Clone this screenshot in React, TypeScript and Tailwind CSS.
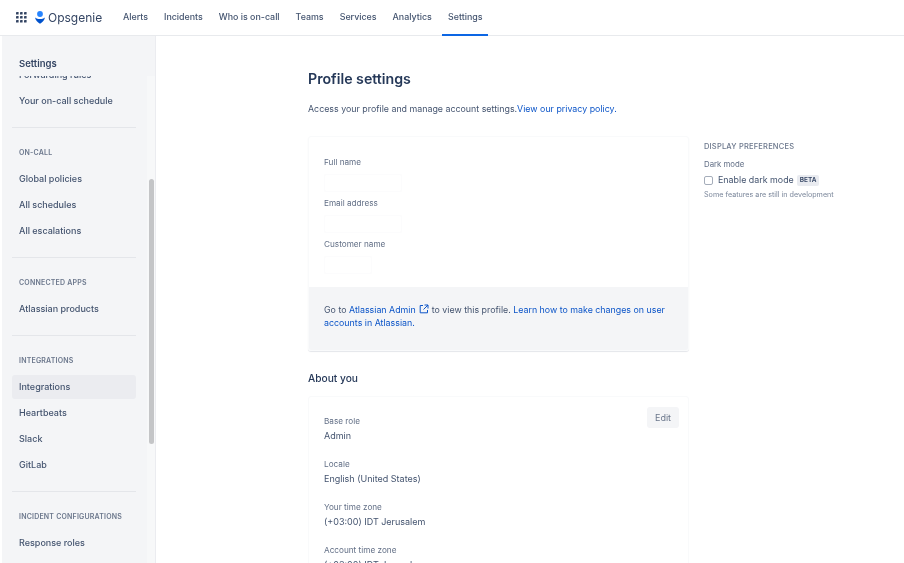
import React from "react";

const nav = ["Alerts", "Incidents", "Who is on-call", "Teams", "Services", "Analytics", "Settings"];

function Item({ label, active }: { label: string; active?: boolean }) {
  return (
    <div className={`h-[24px] mb-[2px] flex items-center px-[7px] rounded-[3px] text-[9px] font-medium whitespace-nowrap text-[#44546f] ${active ? "bg-[#ebecf0]" : ""}`}>
      {label}
    </div>
  );
}

function Heading({ label }: { label: string }) {
  return <div className="h-[12px] mb-[8px] px-[7px] flex items-center text-[7px] font-semibold tracking-[0.2px] whitespace-nowrap text-[#6b778c]">{label}</div>;
}

function Divider() {
  return <div className="h-px bg-[#e4e6ea] mt-[14px] mb-[19px]" />;
}

function Field({ label, value }: { label: string; value: string }) {
  return (
    <div className="h-[43px]">
      <div className="h-[17px] flex items-center text-[8.2px] text-[#626f86]">{label}</div>
      <div className="h-[11px] flex items-center text-[9px] text-[#44546f] whitespace-nowrap">{value}</div>
    </div>
  );
}

function Blank({ label, w }: { label: string; w: number }) {
  return (
    <div className="h-[41px]">
      <div className="h-[14px] flex items-center text-[8.2px] text-[#626f86]">{label}</div>
      <div className="mt-[5px] h-[18px] border border-[#fcfcfd] rounded-[2px]" style={{ width: w }} />
    </div>
  );
}

export default function App() {
  return (
    <div className="w-[904px] h-[563px] overflow-hidden bg-white flex flex-col font-['Inter',sans-serif] blur-[0.5px]">
      <header className="h-[36px] shrink-0 flex items-stretch border-b border-[#e8eaed] pl-[16px]">
        <div className="flex items-center w-[99px] shrink-0">
          <svg width="11" height="11" viewBox="0 0 11 11" fill="#344563">
            {[0, 4, 8].flatMap((y) =>
              [0, 4, 8].map((x) => <rect key={`${x}-${y}`} x={x} y={y} width="2.6" height="2.6" rx="0.4" />)
            )}
          </svg>
          <svg className="ml-[8px]" width="10" height="13" viewBox="0 0 10 13" fill="#2684ff">
            <circle cx="5" cy="3" r="2.9" />
            <path d="M0.2 6.4 C1.5 7.6 3 8 5 8 C7 8 8.5 7.6 9.8 6.4 C10.2 8.4 7.6 11.2 5 12.8 C2.4 11.2 -0.2 8.4 0.2 6.4 Z" fill="#0052cc" />
          </svg>
          <span className="ml-[3px] text-[12px] text-[#344563]">Opsgenie</span>
        </div>
        <nav className="flex items-stretch">
          {nav.map((n) => (
            <div
              key={n}
              className={`flex items-center -mb-px text-[8.87px] font-medium text-[#44546f] ${n === "Settings" ? "ml-[2.5px] w-[46px] justify-center border-b-2 border-[#0c66e4]" : "px-[8px] pb-[2px]"}`}
            >
              {n}
            </div>
          ))}
        </nav>
      </header>

      <div className="flex-1 flex min-h-0">
        <aside className="w-[154px] ml-[2px] shrink-0 bg-[#f4f5f7] flex flex-col border-r border-[#ebecf0]">
          <div className="h-[40px] shrink-0 pl-[17px] pt-[22px] text-[9.5px] leading-[12px] font-semibold text-[#344563]">Settings</div>
          <div className="flex-1 min-h-0 flex">
            <div className="w-[146px] pl-[10px] pr-[11px] overflow-hidden">
              <div className="-mt-[13px]">
                <Item label="Forwarding rules" />
                <Item label="Your on-call schedule" />
                <Divider />
                <Heading label="ON-CALL" />
                <Item label="Global policies" />
                <Item label="All schedules" />
                <Item label="All escalations" />
                <Divider />
                <Heading label="CONNECTED APPS" />
                <Item label="Atlassian products" />
                <Divider />
                <Heading label="INTEGRATIONS" />
                <Item label="Integrations" active />
                <Item label="Heartbeats" />
                <Item label="Slack" />
                <Item label="GitLab" />
                <Divider />
                <Heading label="INCIDENT CONFIGURATIONS" />
                <Item label="Response roles" />
              </div>
            </div>
            <div className="w-[8px] bg-[#f7f8f9] pt-[103px]">
              <div className="ml-[2px] w-[5px] h-[265px] rounded-full bg-[#c4c5c7]" />
            </div>
          </div>
        </aside>

        <main className="flex-1 min-w-0 pl-[152px] flex gap-[15px] overflow-hidden">
          <div className="w-[381px] shrink-0">
            <h1 className="mt-[33px] h-[20px] flex items-center text-[14.2px] font-semibold text-[#253858]">Profile settings</h1>
            <p className="mt-[13px] h-[14px] flex items-center text-[8.85px] text-[#44546f] whitespace-pre">
              Access your profile and manage account settings.<span className="text-[#0c55c8]">View our privacy policy.</span>
            </p>
            <section className="mt-[20px] rounded-[3px] border border-[#f9fafb] overflow-hidden shadow-[0_1px_1px_#e4e6ea]">
              <div className="h-[150px] pt-[18px] px-[15px]">
                <Blank label="Full name" w={78} />
                <Blank label="Email address" w={78} />
                <Blank label="Customer name" w={48} />
              </div>
              <div className="h-[63px] bg-[#f4f5f7] px-[15px] pt-[16px] text-[8.85px] leading-[13px] text-[#44546f]">
                Go to <span className="text-[#0c55c8]">Atlassian Admin</span>
                <svg className="inline mx-[3px] align-[-1px]" width="10" height="10" viewBox="0 0 10 10" fill="none" stroke="#0c55c8" strokeWidth="1">
                  <path d="M4 1.5H1.2V8.8H8.5V6M5.5 1H9V4.5M9 1L4.5 5.5" />
                </svg>
                to view this profile. <span className="text-[#0c55c8]">Learn how to make changes on user accounts in Atlassian.</span>
              </div>
            </section>
            <h2 className="mt-[21px] h-[14px] flex items-center text-[10.2px] font-medium text-[#253858]">About you</h2>
            <section className="mt-[10px] relative rounded-[3px] border border-[#f9fafb] h-[300px] px-[15px] pt-[16px]">
              <div className="absolute right-[9px] top-[10px] w-[32px] h-[21px] rounded-[3px] bg-[#f4f5f7] flex items-center justify-center text-[9px] text-[#6b778c]">Edit</div>
              <Field label="Base role" value="Admin" />
              <Field label="Locale" value="English (United States)" />
              <Field label="Your time zone" value="(+03:00) IDT Jerusalem" />
              <Field label="Account time zone" value="(+03:00) IDT Jerusalem" />
            </section>
          </div>
          <div className="w-[140px] shrink-0 pt-[105px]">
            <div className="h-[12px] flex items-center text-[7.5px] tracking-[0.2px] font-medium text-[#6b778c] whitespace-nowrap">DISPLAY PREFERENCES</div>
            <div className="mt-[6px] h-[12px] flex items-center text-[7.8px] text-[#626f86]">Dark mode</div>
            <div className="mt-[1px] h-[16px] flex items-center whitespace-nowrap">
              <div className="w-[9px] h-[9px] rounded-[2px] border border-[#a5adba] bg-white" />
              <span className="ml-[5px] text-[8.9px] text-[#44546f]">Enable dark mode</span>
              <span className="ml-[3px] px-[3px] rounded-[2px] bg-[#e9ebf0] text-[6.5px] leading-[11px] font-semibold text-[#344563]">BETA</span>
            </div>
            <div className="mt-[1px] h-[12px] flex items-center text-[7.2px] text-[#7a869a] whitespace-nowrap">Some features are still in development</div>
          </div>
        </main>
      </div>
    </div>
  );
}
